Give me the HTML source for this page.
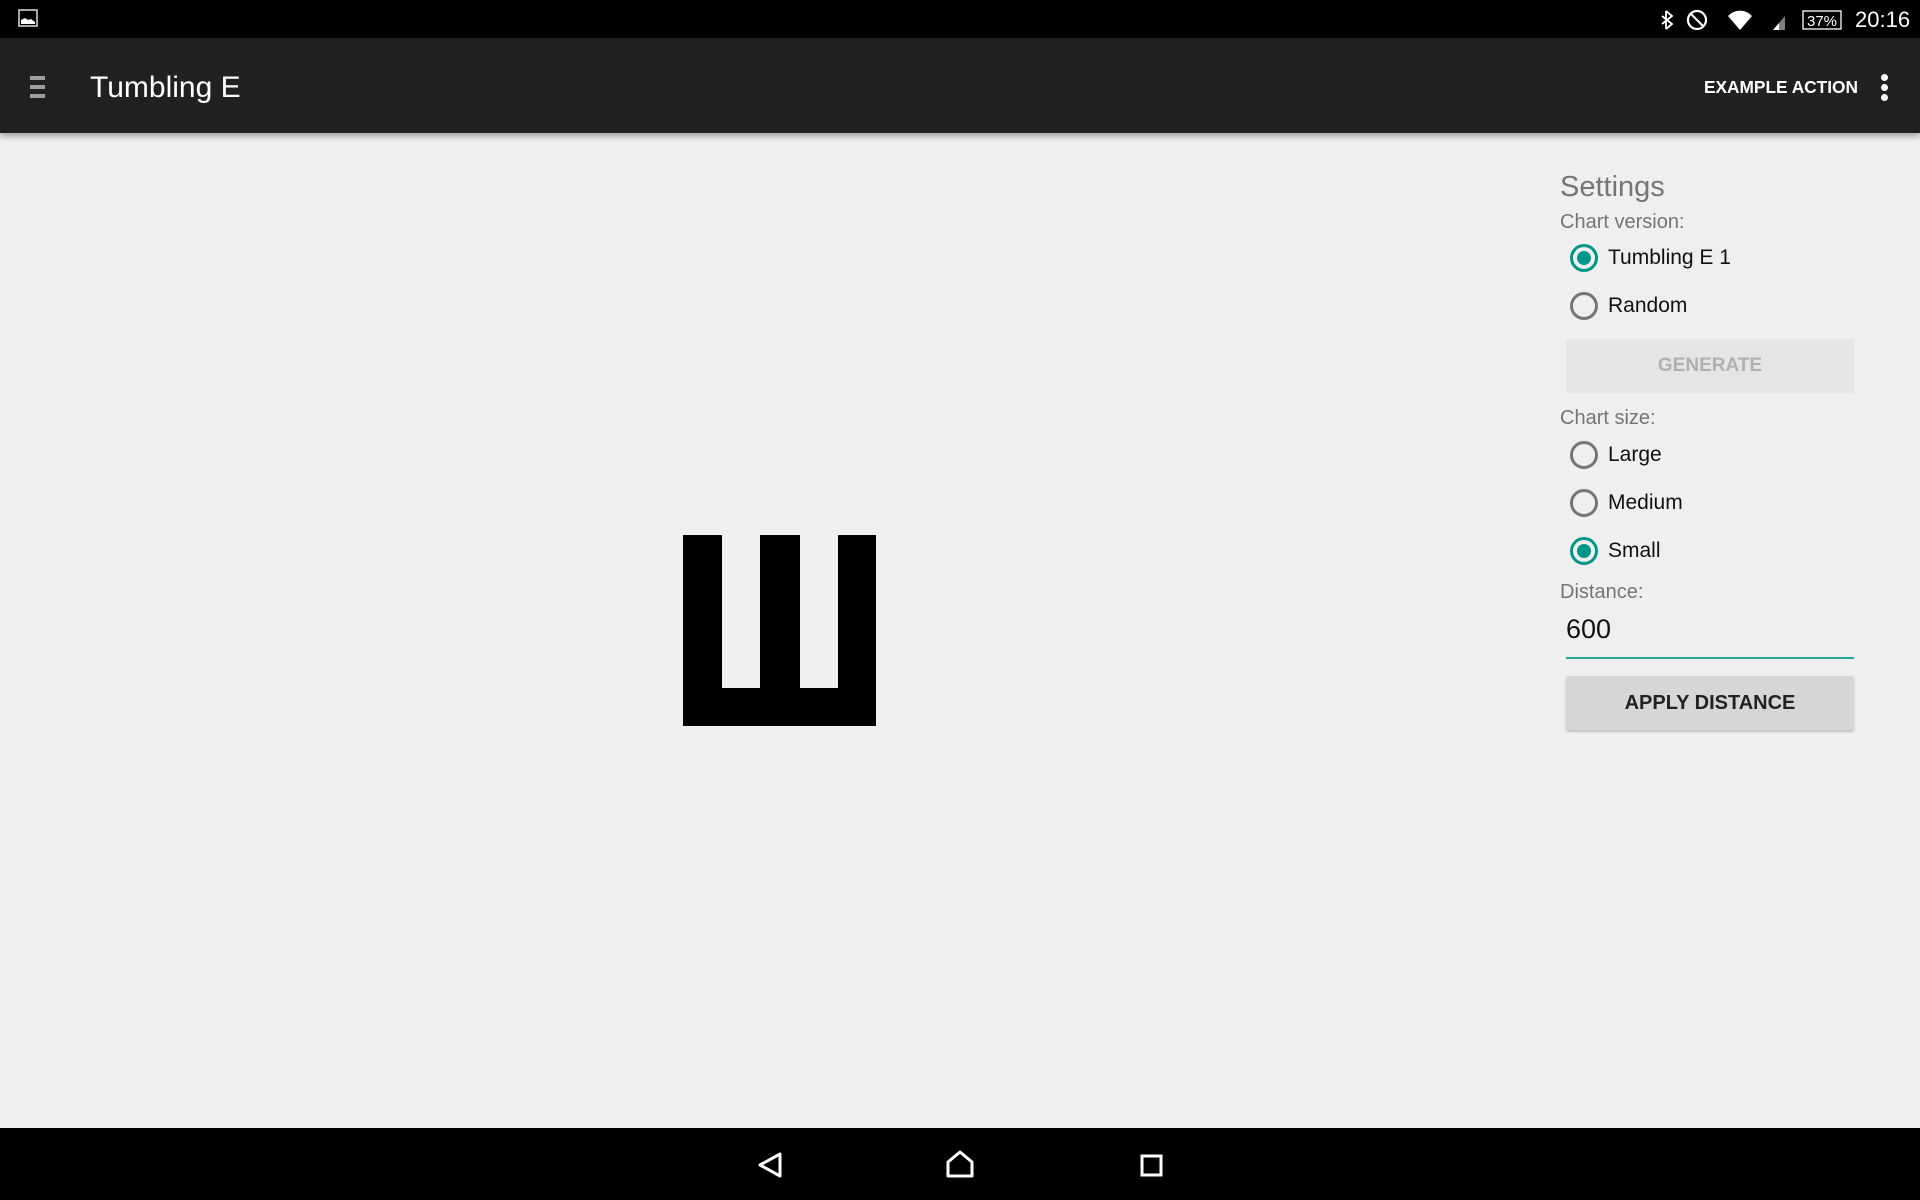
<!DOCTYPE html>
<html><head><meta charset="utf-8"><style>
*{margin:0;padding:0;box-sizing:border-box}
body{width:1920px;height:1200px;background:#efefef;font-family:"Liberation Sans",sans-serif;position:relative;overflow:hidden}
.abs{position:absolute}
.sb{left:0;top:0;width:1920px;height:38px;background:#000}
.ab{left:0;top:38px;width:1920px;height:95px;background:#212121;box-shadow:0 3px 6px rgba(0,0,0,.35)}
.nav{left:0;top:1128px;width:1920px;height:72px;background:#000}
.lbl{color:#757575;font-size:20px;left:1560px}
.radio{width:28px;height:28px;border-radius:50%;border:3px solid #757575}
.radio.on{border-color:#009688}
.radio.on::after{content:"";position:absolute;left:4px;top:4px;width:14px;height:14px;border-radius:50%;background:#009688}
.rt{font-size:21px;color:#111;left:1608px}
.e{background:#000}
</style></head><body>
<div class="abs sb"></div>
<svg class="abs" style="left:18px;top:9px" width="22" height="20"><rect x="1" y="1" width="18" height="16" fill="none" stroke="#ddd" stroke-width="1.5"/><path d="M3 15 L3 11 L7 9 L10 11 L13 10 L17 13 L17 15Z" fill="#fff"/></svg>
<svg class="abs" style="left:1655px;top:8px" width="200" height="24">
<path d="M11 3 L17 8 L7 16 M11 21 L17 16 L7 8 M11 3V21" stroke="#fff" stroke-width="1.8" fill="none"/>
<circle cx="42" cy="12" r="9" stroke="#fff" stroke-width="2.2" fill="none"/><path d="M36 6 L48 18" stroke="#fff" stroke-width="2.2"/>
<path d="M73 8 A16 16 0 0 1 97 8 L85 22Z" fill="#fff"/>
<path d="M118 22 L130 8 L130 22Z" fill="#fff" opacity=".5"/><path d="M118 22 L124 15 L124 22Z" fill="#fff"/>
<rect x="148" y="3" width="38" height="18" fill="none" stroke="#fff" stroke-width="1.3"/>
<text x="152" y="18" fill="#fff" font-size="15" font-family="Liberation Sans">37%</text>
</svg>
<div class="abs" style="left:1855px;top:7px;color:#fff;font-size:22px">20:16</div>
<div class="abs ab"></div>
<div class="abs" style="left:30px;top:76px;width:15px;height:4px;background:#9e9e9e;box-shadow:0 9px 0 #9e9e9e,0 18px 0 #9e9e9e"></div>
<div class="abs" style="left:90px;top:71px;color:#fff;font-size:30px">Tumbling E</div>
<div class="abs" style="left:1704px;top:77px;color:#fff;font-size:17.3px;font-weight:bold">EXAMPLE ACTION</div>
<div class="abs" style="left:1881px;top:74px;width:7px;height:7px;border-radius:50%;background:#fff;box-shadow:0 10px 0 #fff,0 20px 0 #fff"></div>

<div class="abs e" style="left:683px;top:535px;width:39px;height:191px"></div>
<div class="abs e" style="left:760px;top:535px;width:40px;height:191px"></div>
<div class="abs e" style="left:838px;top:535px;width:38px;height:191px"></div>
<div class="abs e" style="left:683px;top:688px;width:193px;height:38px"></div>

<div class="abs" style="left:1560px;top:171px;color:#757575;font-size:29px">Settings</div>
<div class="abs lbl" style="top:211px">Chart version:</div>
<div class="abs radio on" style="left:1570px;top:244px"></div>
<div class="abs rt" style="top:246px">Tumbling E 1</div>
<div class="abs radio" style="left:1570px;top:292px"></div>
<div class="abs rt" style="top:294px">Random</div>
<div class="abs" style="left:1566px;top:339px;width:288px;height:54px;background:#e5e5e5;color:#b0b0b0;font-size:19px;font-weight:bold;text-align:center;line-height:54px">GENERATE</div>
<div class="abs lbl" style="top:407px">Chart size:</div>
<div class="abs radio" style="left:1570px;top:441px"></div>
<div class="abs rt" style="top:443px">Large</div>
<div class="abs radio" style="left:1570px;top:489px"></div>
<div class="abs rt" style="top:491px">Medium</div>
<div class="abs radio on" style="left:1570px;top:537px"></div>
<div class="abs rt" style="top:539px">Small</div>
<div class="abs lbl" style="top:581px">Distance:</div>
<div class="abs" style="left:1566px;top:614px;font-size:27px;color:#111">600</div>
<div class="abs" style="left:1566px;top:657px;width:288px;height:2px;background:#26a69a"></div>
<div class="abs" style="left:1566px;top:676px;width:288px;height:54px;background:#d6d6d6;box-shadow:0 2px 2px rgba(0,0,0,.2);color:#222;font-size:20px;font-weight:bold;text-align:center;line-height:54px;border-radius:2px">APPLY DISTANCE</div>

<div class="abs nav"></div>
<svg class="abs" style="left:740px;top:1140px" width="440" height="50">
<path d="M40 14 L40 36 L20 25Z" fill="none" stroke="#fff" stroke-width="3" stroke-linejoin="round"/>
<path d="M208 36 L208 22 L220 12 L232 22 L232 36Z" fill="none" stroke="#fff" stroke-width="3" stroke-linejoin="round"/>
<rect x="402" y="16" width="19" height="19" fill="none" stroke="#fff" stroke-width="3"/>
</svg>
</body></html>
